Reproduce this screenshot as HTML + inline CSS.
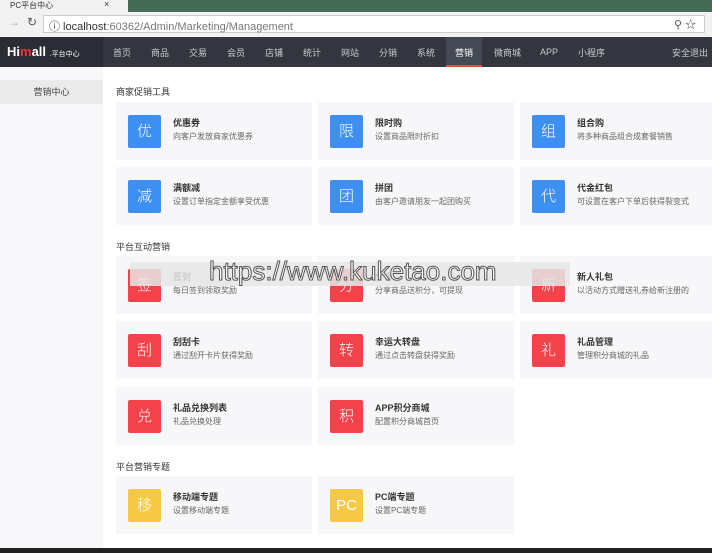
<!DOCTYPE html><html><head><meta charset="utf-8"><style>
*{margin:0;padding:0;box-sizing:border-box}
body{width:712px;height:553px;overflow:hidden;background:#fff;font-family:"Liberation Sans","Noto Sans CJK SC",sans-serif;position:relative}
.a{position:absolute}
.card{position:absolute;width:196px;height:58px;background:#f7f7f9}
.ic{position:absolute;left:12px;top:13px;width:33px;height:33px;border-radius:2px;color:#fff;font-size:15px;text-align:center;line-height:33px;font-weight:300}
.t{position:absolute;left:57px;top:14px;font-size:9px;color:#333;font-weight:bold}
.d{position:absolute;left:57px;top:29px;font-size:8px;color:#666;white-space:nowrap}
.b{background:#3d8ff2}.r{background:#f3424a}.y{background:#f6c944}
.sec{position:absolute;left:116px;font-size:9px;color:#333}
.nav span{position:absolute;top:46px;font-size:9px;color:#ccc}
</style></head><body>
<div class="a" style="left:0;top:0;width:712px;height:12px;background:#456b58"></div>
<div class="a" style="left:0;top:0;width:128px;height:12px;background:#f2f2f2"></div>
<div class="a" style="left:10px;top:0;font-size:8px;color:#333">PC平台中心</div>
<div class="a" style="left:104px;top:-1px;font-size:9px;color:#333">×</div>
<div class="a" style="left:0;top:12px;width:712px;height:25px;background:#f2f2f2"></div>
<div class="a" style="left:8px;top:15px;font-size:12px;color:#aaa">→</div>
<div class="a" style="left:27px;top:15px;font-size:12px;color:#555">↻</div>
<div class="a" style="left:43px;top:15px;width:662px;height:18px;background:#fff;border:1px solid #ccc"></div>
<div class="a" style="left:49px;top:18px;font-size:11px;color:#333">ⓘ localhost<span style="color:#777">:60362/Admin/Marketing/Management</span></div>
<div class="a" style="left:674px;top:16px;font-size:11px;color:#555">⚲ ☆</div>
<div class="a" style="left:0;top:37px;width:712px;height:30px;background:#33353f"></div>
<div class="a" style="left:0;top:37px;width:103px;height:30px;background:#2b2d36"></div>
<div class="a" style="left:7px;top:44px;font-size:13px;color:#fff;font-weight:bold">Hi<span style="color:#e33">m</span>all <span style="font-size:7px;font-weight:normal">.平台中心</span></div>
<div class="a" style="left:446px;top:37px;width:36px;height:30px;background:#444a55;border-bottom:2px solid #e44"></div>
<div class="nav">
<span style="left:113px">首页</span><span style="left:151px">商品</span><span style="left:189px">交易</span><span style="left:227px">会员</span><span style="left:265px">店铺</span><span style="left:303px">统计</span><span style="left:341px">网站</span><span style="left:379px">分销</span><span style="left:417px">系统</span><span style="left:455px;color:#fff">营销</span><span style="left:494px">微商城</span><span style="left:540px;top:47px">APP</span><span style="left:578px">小程序</span><span style="left:672px">安全退出</span></div>
<div class="a" style="left:0;top:67px;width:103px;height:481px;background:#f8f8fa"></div>
<div class="a" style="left:0;top:80px;width:103px;height:24px;background:#ebebeb;font-size:9px;color:#444;text-align:center;line-height:24px">营销中心</div>
<div class="a" style="left:0;top:548px;width:712px;height:5px;background:#222"></div>
<div class="sec" style="top:85px">商家促销工具</div>
<div class="card" style="left:116px;top:102px"><div class="ic b">优</div><div class="t">优惠券</div><div class="d">向客户发放商家优惠券</div></div>
<div class="card" style="left:318px;top:102px"><div class="ic b">限</div><div class="t">限时购</div><div class="d">设置商品限时折扣</div></div>
<div class="card" style="left:520px;top:102px;width:192px"><div class="ic b">组</div><div class="t">组合购</div><div class="d">将多种商品组合成套餐销售</div></div>
<div class="card" style="left:116px;top:167px"><div class="ic b">减</div><div class="t">满额减</div><div class="d">设置订单指定金额享受优惠</div></div>
<div class="card" style="left:318px;top:167px"><div class="ic b">团</div><div class="t">拼团</div><div class="d">由客户邀请朋友一起团购买</div></div>
<div class="card" style="left:520px;top:167px;width:192px"><div class="ic b">代</div><div class="t">代金红包</div><div class="d">可设置在客户下单后获得裂变式</div></div>
<div class="sec" style="top:240px">平台互动营销</div>
<div class="card" style="left:116px;top:256px"><div class="ic r">签</div><div class="t">签到</div><div class="d">每日签到领取奖励</div></div>
<div class="card" style="left:318px;top:256px"><div class="ic r">分</div><div class="t">分享</div><div class="d">分享商品送积分，可提现</div></div>
<div class="card" style="left:520px;top:256px;width:192px"><div class="ic r">新</div><div class="t">新人礼包</div><div class="d">以活动方式赠送礼券给新注册的</div></div>
<div class="a" style="left:130px;top:262px;width:440px;height:24px;background:#e6e6e8;opacity:.85"></div>
<div class="a" style="left:209px;top:256px;font-size:26px;color:#fff;-webkit-text-stroke:1px #555;white-space:nowrap">https://www.kuketao.com</div>
<div class="card" style="left:116px;top:321px"><div class="ic r">刮</div><div class="t">刮刮卡</div><div class="d">通过刮开卡片获得奖励</div></div>
<div class="card" style="left:318px;top:321px"><div class="ic r">转</div><div class="t">幸运大转盘</div><div class="d">通过点击转盘获得奖励</div></div>
<div class="card" style="left:520px;top:321px;width:192px"><div class="ic r">礼</div><div class="t">礼品管理</div><div class="d">管理积分商城的礼品</div></div>
<div class="card" style="left:116px;top:387px"><div class="ic r">兑</div><div class="t">礼品兑换列表</div><div class="d">礼品兑换处理</div></div>
<div class="card" style="left:318px;top:387px"><div class="ic r">积</div><div class="t">APP积分商城</div><div class="d">配置积分商城首页</div></div>
<div class="sec" style="top:460px">平台营销专题</div>
<div class="card" style="left:116px;top:476px"><div class="ic y">移</div><div class="t">移动端专题</div><div class="d">设置移动端专题</div></div>
<div class="card" style="left:318px;top:476px"><div class="ic y">PC</div><div class="t">PC端专题</div><div class="d">设置PC端专题</div></div>
</body></html>
